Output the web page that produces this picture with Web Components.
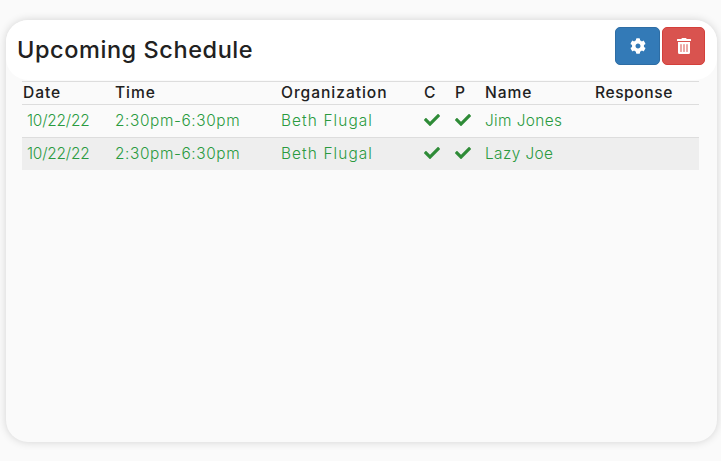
<!DOCTYPE html>
<html>
<head>
<meta charset="utf-8">
<style>
  html, body { margin: 0; height: 100%; background: #fafafa; }
  body { font-family: Inter, "Liberation Sans", sans-serif; color: #212121; overflow: hidden; }
</style>
</head>
<body>
<schedule-page>
  <schedule-card title="Upcoming Schedule">
    <schedule-row head date="Date" time="Time" org="Organization" c="C" p="P" name="Name" response="Response"></schedule-row>
    <schedule-row date="10/22/22" time="2:30pm-6:30pm" org="Beth Flugal" name="Jim Jones"></schedule-row>
    <schedule-row alt date="10/22/22" time="2:30pm-6:30pm" org="Beth Flugal" name="Lazy Joe"></schedule-row>
  </schedule-card>
</schedule-page>

<script>
const CHECK = `<svg viewBox="0 0 512 512" width="16" height="16"><path fill="#2e8b37" d="M173.898 439.404l-166.4-166.4c-9.997-9.997-9.997-26.206 0-36.204l36.203-36.204c9.997-9.998 26.207-9.998 36.204 0L192 312.69 432.095 72.596c9.997-9.997 26.207-9.997 36.204 0l36.203 36.204c9.997 9.997 9.997 26.206 0 36.204l-294.4 294.401c-9.998 9.997-26.207 9.997-36.204-.001z"/></svg>`;
const COG = `<svg viewBox="0 0 512 512" width="16" height="16"><path fill="#fff" d="M487.4 315.7l-42.6-24.6c4.3-23.2 4.3-47 0-70.2l42.6-24.6c4.9-2.8 7.1-8.6 5.5-14-11.1-35.6-30-67.8-54.7-94.6-3.8-4.1-10-5.1-14.8-2.3L380.8 110c-17.9-15.4-38.5-27.3-60.8-35.1V25.8c0-5.6-3.9-10.5-9.4-11.7-36.7-8.2-74.3-7.8-109.2 0-5.5 1.2-9.4 6.1-9.4 11.7V75c-22.2 7.9-42.8 19.8-60.8 35.1L88.7 85.5c-4.9-2.8-11-1.9-14.8 2.3-24.7 26.7-43.6 58.9-54.7 94.6-1.7 5.4.6 11.2 5.5 14L67.3 221c-4.3 23.2-4.3 47 0 70.2l-42.6 24.6c-4.9 2.8-7.1 8.6-5.5 14 11.1 35.6 30 67.8 54.7 94.6 3.8 4.1 10 5.1 14.8 2.3l42.6-24.6c17.9 15.4 38.5 27.3 60.8 35.1v49.2c0 5.6 3.9 10.5 9.4 11.7 36.7 8.2 74.3 7.8 109.2 0 5.5-1.2 9.4-6.1 9.4-11.7v-49.2c22.2-7.9 42.8-19.8 60.8-35.1l42.6 24.6c4.9 2.8 11 1.9 14.8-2.3 24.7-26.7 43.6-58.9 54.7-94.6 1.5-5.5-.7-11.3-5.6-14.1zM256 336c-44.1 0-80-35.9-80-80s35.9-80 80-80 80 35.9 80 80-35.9 80-80 80z"/></svg>`;
const TRASH = `<svg viewBox="0 0 448 512" width="14" height="16"><path fill="#fff" d="M32 464a48 48 0 0 0 48 48h288a48 48 0 0 0 48-48V128H32zm272-256a16 16 0 0 1 32 0v224a16 16 0 0 1-32 0zm-96 0a16 16 0 0 1 32 0v224a16 16 0 0 1-32 0zm-96 0a16 16 0 0 1 32 0v224a16 16 0 0 1-32 0zM432 32H312l-9.4-18.7A24 24 0 0 0 281.1 0H166.8a23.72 23.72 0 0 0-21.4 13.3L136 32H16A16 16 0 0 0 0 48v32a16 16 0 0 0 16 16h416a16 16 0 0 0 16-16V48a16 16 0 0 0-16-16z"/></svg>`;

class SchedulePage extends HTMLElement {
  constructor() {
    super();
    this.attachShadow({ mode: 'open' });
    this.shadowRoot.innerHTML = `
      <style>
        :host {
          display: flex;
          box-sizing: border-box;
          height: 461px;
          padding: 20px 4px 19px 6px;
        }
      </style>
      <slot></slot>
    `;
  }
}

class ScheduleCard extends HTMLElement {
  constructor() {
    super();
    this.attachShadow({ mode: 'open' });
    this.shadowRoot.innerHTML = `
      <style>
        :host {
          display: block;
          flex: 1;
          background: #fafafa;
          border-radius: 22px;
          box-shadow: 0 0 8px rgba(0, 0, 0, 0.16);
        }
        header {
          display: flex;
          justify-content: space-between;
          height: 60px;
          box-sizing: border-box;
          padding: 7px 12px 0 11px;
          background: #fff;
          border-radius: 22px;
        }
        h1 {
          margin: 0;
          padding-top: 9px;
          font-size: 23.5px;
          line-height: 27px;
          font-weight: 500;
          letter-spacing: 0.57px;
          color: #212121;
        }
        .actions { display: flex; gap: 2px; }
        button {
          display: flex;
          align-items: center;
          justify-content: center;
          height: 38px;
          padding: 0;
          border-radius: 5px;
          border: 1px solid;
        }
        .settings { width: 45px; background: #337ab7; border-color: #2e6da4; }
        .remove { width: 43px; background: #d9534f; border-color: #d43f3a; }
        .rows {
          margin: 1px 18px 0 16px;
        }
      </style>
      <header>
        <h1></h1>
        <div class="actions">
          <button class="settings">${COG}</button>
          <button class="remove">${TRASH}</button>
        </div>
      </header>
      <div class="rows"><slot></slot></div>
    `;
    this.shadowRoot.querySelector('h1').textContent = this.getAttribute('title');
  }
}

class ScheduleRow extends HTMLElement {
  constructor() {
    super();
    this.attachShadow({ mode: 'open' });
    const isHead = this.hasAttribute('head');
    const a = n => this.getAttribute(n) || '';
    this.shadowRoot.innerHTML = `
      <style>
        :host {
          display: grid;
          grid-template-columns: 93px 166px 143px 31px 30px 110px 1fr;
          align-items: center;
          box-sizing: border-box;
          height: 33px;
          padding-bottom: 2px;
          border-top: 1px solid #ddd;
          font-size: 15.4px;
          font-weight: 300;
          letter-spacing: 0.4px;
          color: #2a9a3f;
        }
        :host([head]) {
          height: 23px;
          padding-bottom: 1px;
          font-weight: 500;
          font-size: 15.6px;
          letter-spacing: 0.9px;
          color: #212121;
        }
        div { white-space: nowrap; }
        :host([alt]) { background: #eee; }
        .date { padding-left: ${isHead ? 1 : 5}px; letter-spacing: ${isHead ? 0.9 : -0.2}px; }
        .time { letter-spacing: ${isHead ? 0.9 : 0.6}px; }
        .org { letter-spacing: ${isHead ? 0.95 : 1.1}px; }
        .response { letter-spacing: 0.55px; }
        .icon { display: flex; }
      </style>
      <div class="date">${a('date')}</div>
      <div class="time">${a('time')}</div>
      <div class="org">${a('org')}</div>
      <div class="${isHead ? '' : 'icon'}">${isHead ? a('c') : CHECK}</div>
      <div class="${isHead ? '' : 'icon'}">${isHead ? a('p') : CHECK}</div>
      <div>${a('name')}</div>
      <div class="response">${a('response')}</div>
    `;
  }
}

customElements.define('schedule-page', SchedulePage);
customElements.define('schedule-card', ScheduleCard);
customElements.define('schedule-row', ScheduleRow);
</script>
</body>
</html>
